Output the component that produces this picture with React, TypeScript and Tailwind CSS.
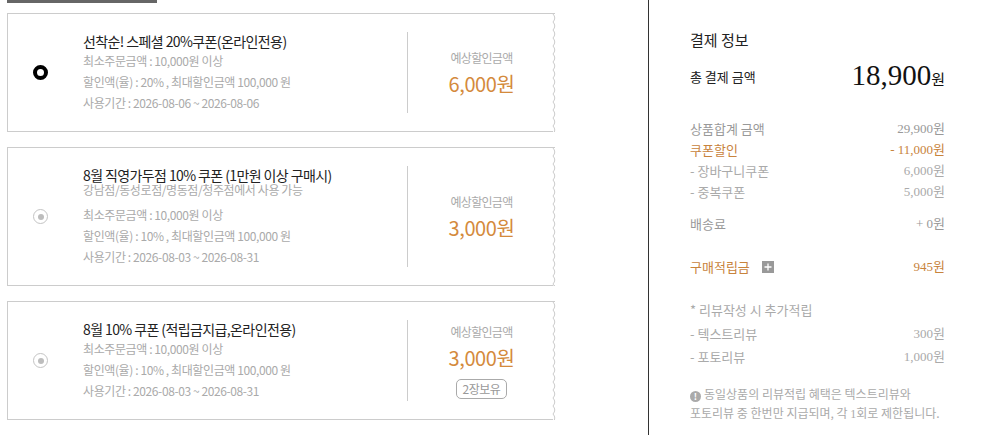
import React from 'react';

type Coupon = {
  title: string;
  sub?: string;
  rate: string;
  period: string;
  amount: string;
  selected?: boolean;
  badge?: string;
  height: number;
};

const COUPONS: Coupon[] = [
  {
    title: '선착순! 스페셜 20%쿠폰(온라인전용)',
    rate: '20%',
    period: '2026-08-06 ~ 2026-08-06',
    amount: '6,000원',
    selected: true,
    height: 119,
  },
  {
    title: '8월 직영가두점 10% 쿠폰 (1만원 이상 구매시)',
    sub: '강남점/동성로점/명동점/청주점에서 사용 가능',
    rate: '10%',
    period: '2026-08-03 ~ 2026-08-31',
    amount: '3,000원',
    height: 139,
  },
  {
    title: '8월 10% 쿠폰 (적립금지급,온라인전용)',
    rate: '10%',
    period: '2026-08-03 ~ 2026-08-31',
    amount: '3,000원',
    badge: '2장보유',
    height: 119,
  },
];

// scalloped right edge of the ticket
function Wave({ h }: { h: number }) {
  let d = 'M1 0';
  for (let y = 0; y < h; y += 8) d += ' q 3.5 4 0 8';
  return (
    <svg className="absolute top-0 right-[-3px]" width="6" height={h} viewBox={`0 0 6 ${h}`}>
      <path d={d} fill="white" stroke="#cccccc" strokeWidth="1" />
    </svg>
  );
}

function Radio({ on }: { on?: boolean }) {
  if (on) {
    return <span className="block w-[15px] h-[15px] rounded-full border-[4.5px] border-black bg-white" />;
  }
  return (
    <span className="flex items-center justify-center w-[15px] h-[15px] rounded-full border border-[#c4c4c4] bg-white">
      <span className="block w-[6px] h-[6px] rounded-full bg-[#bdbdbd]" />
    </span>
  );
}

function CouponCard({ c }: { c: Coupon }) {
  return (
    <div
      className="relative flex items-stretch w-[548px] border border-r-0 border-[#cccccc] bg-white"
      style={{ height: c.height }}
    >
      <div className="w-[75px] pl-[25px] flex items-center">
        <Radio on={c.selected} />
      </div>
      <div className="w-[324px] flex flex-col justify-center tracking-[-0.4px]">
        <p className={`text-[14px] text-[#222] tracking-[-0.6px] ${c.sub ? 'leading-[16px]' : 'leading-[18px]'}`}>{c.title}</p>
        {c.sub && <p className="text-[12px] leading-[14px] text-[#aaa] mb-[7px]">{c.sub}</p>}
        <p className="text-[12px] leading-[21px] text-[#aaa]">최소주문금액 : 10,000원 이상</p>
        <p className="text-[12px] leading-[21px] text-[#aaa]">할인액(율) : {c.rate} , 최대할인금액 100,000 원</p>
        <p className="text-[12px] leading-[21px] text-[#aaa]">사용기간 : {c.period}</p>
      </div>
      <div className="my-[18px] w-px bg-[#cccccc]" />
      <div className="flex-1 flex flex-col items-center justify-center">
        <p className="text-[12px] leading-[18px] text-[#aaa] tracking-[-0.7px]">예상할인금액</p>
        <p className="mt-[4px] text-[20px] leading-[26px] text-[#d48a3c] tracking-[-0.4px]">{c.amount}</p>
        {c.badge && (
          <span className="mt-[8px] px-[6px] h-[20px] flex items-center rounded-[5px] border border-[#aaa] text-[12px] text-[#999] tracking-[-0.5px]">
            {c.badge}
          </span>
        )}
      </div>
      <Wave h={c.height - 1} />
    </div>
  );
}

function Row({ label, value, className }: { label: React.ReactNode; value: string; className: string }) {
  return (
    <div className={`flex justify-between ${className}`}>
      <span className="font-['Noto_Sans_CJK_KR',sans-serif]">{label}</span>
      <span>{value}</span>
    </div>
  );
}

export default function App() {
  return (
    <div className="w-[981px] h-[435px] flex bg-white overflow-hidden font-['Noto_Sans_CJK_KR',sans-serif]">
      <div className="w-[648px] pl-[7px]">
        <div className="w-[150px] h-[3px] bg-[#666]" />
        <div className="mt-[10px] flex flex-col gap-[15px]">
          {COUPONS.map((c, i) => (
            <CouponCard key={i} c={c} />
          ))}
        </div>
      </div>

      <div className="flex-1 border-l border-[#333] pl-[41px] pr-[36px] pt-[29px] font-['Liberation_Serif','Noto_Sans_CJK_KR',serif]">
        <p className="text-[15px] leading-[22px] text-[#222] font-['Noto_Sans_CJK_KR',sans-serif]">결제 정보</p>
        <div className="mt-[10px] h-[32px] flex items-center justify-between">
          <span className="text-[13px] text-[#222] font-['Noto_Sans_CJK_KR',sans-serif]">총 결제 금액</span>
          <span className="text-[29px] leading-[32px] text-[#111]">
            18,900<span className="text-[15px]">원</span>
          </span>
        </div>

        <Row className="mt-[25px] text-[13px] leading-[21px] text-[#999]" label="상품합계 금액" value="29,900원" />
        <Row className="text-[13px] leading-[21px] text-[#c8833c]" label="쿠폰할인" value="- 11,000원" />
        <Row className="text-[13px] leading-[21px] text-[#aaa]" label="- 장바구니쿠폰" value="6,000원" />
        <Row className="text-[13px] leading-[21px] text-[#aaa]" label="- 중복쿠폰" value="5,000원" />
        <Row className="mt-[11px] text-[13px] leading-[21px] text-[#999]" label="배송료" value="+ 0원" />
        <Row
          className="mt-[22px] text-[13px] leading-[21px] text-[#c8833c]"
          label={
            <span className="flex items-center gap-[12px]">
              구매적립금
              <span className="w-[12px] h-[12px] bg-[#999] flex items-center justify-center">
                <svg width="8" height="8" viewBox="0 0 8 8">
                  <path d="M4 0.5v7M0.5 4h7" stroke="white" strokeWidth="1.3" />
                </svg>
              </span>
            </span>
          }
          value="945원"
        />
        <p className="mt-[22px] text-[13px] leading-[21px] text-[#aaa] font-['Noto_Sans_CJK_KR',sans-serif]">* 리뷰작성 시 추가적립</p>
        <Row className="mt-[2px] text-[13px] leading-[23px] text-[#aaa]" label="- 텍스트리뷰" value="300원" />
        <Row className="text-[13px] leading-[23px] text-[#aaa]" label="- 포토리뷰" value="1,000원" />
        <p className="mt-[16px] text-[12px] leading-[19px] text-[#aaa] font-['Noto_Sans_CJK_KR',sans-serif]">
          <span className="inline-flex align-[-1px] items-center justify-center w-[11px] h-[11px] rounded-full bg-[#aaa] text-white text-[9px] font-bold leading-none mr-[3px]">!</span>
          동일상품의 리뷰적립 혜택은 텍스트리뷰와
          <br />
          포토리뷰 중 한번만 지급되며, 각 <span className="font-['Liberation_Serif',serif]">1</span>회로 제한됩니다.
        </p>
      </div>
    </div>
  );
}
